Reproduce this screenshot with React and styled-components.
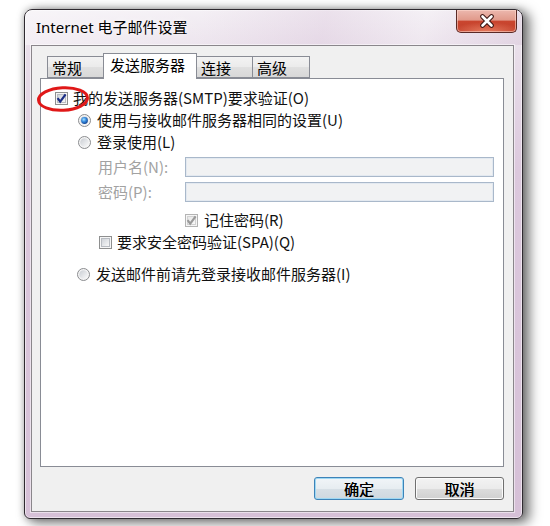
import React, { useId } from 'react';
import styled, { createGlobalStyle } from 'styled-components';

const GlobalStyle = createGlobalStyle`
  html, body { margin: 0; padding: 0; background: #ffffff; }
  body {
    width: 550px; height: 526px; overflow: hidden;
    font-family: "Noto Sans CJK SC", "Noto Sans", sans-serif;
    color: #111;
  }
  * { box-sizing: border-box; }
`;

const Page = styled.div`
  width: 550px;
  height: 526px;
  padding: 9px 0 0 24px;
`;

const Window = styled.div`
  width: 499px;
  height: 510px;
  border: 1px solid #2f2a30;
  border-radius: 8px 8px 6px 6px;
  background: linear-gradient(180deg, #f2edf3 0px, #e9dfea 40px, #dcc8dd 160px, #d6c0d7 100%);
  box-shadow: inset 0 0 0 1px rgba(255, 255, 255, 0.55), 6px 3px 12px 1px rgba(0, 0, 0, 0.5),
    0 0 7px rgba(0, 0, 0, 0.25);
  display: flex;
  flex-direction: column;
`;

const TitleBar = styled.div`
  height: 35px;
  flex: none;
  display: flex;
  justify-content: space-between;
  align-items: flex-start;
  padding-left: 11px;
  border-radius: 7px 7px 0 0;
  background: linear-gradient(100deg, rgba(255, 255, 255, 0.45) 0%, rgba(255, 255, 255, 0.15) 35%,
    rgba(215, 190, 215, 0.25) 60%, rgba(255, 255, 255, 0.2) 80%, rgba(205, 180, 205, 0.3) 100%);
`;

const Title = styled.div`
  font-family: "Noto Sans", "Noto Sans CJK SC", sans-serif;
  font-size: 15px;
  line-height: 20px;
  margin-top: 7px;
  color: #000;
  text-shadow: 0 0 6px rgba(255, 255, 255, 0.9);
`;

const CloseButton = styled.div`
  width: 61px;
  height: 23px;
  margin-right: 5px;
  border: 1px solid #5a2a26;
  border-top: none;
  border-radius: 0 0 5px 5px;
  background: radial-gradient(ellipse 60% 45% at 50% 100%, rgba(240, 140, 110, 0.8), rgba(240, 140, 110, 0) 100%),
    linear-gradient(180deg, #ecb8ae 0%, #e19a8b 45%, #c9452f 52%, #c2402b 100%);
  box-shadow: inset 0 0 0 1px rgba(255, 220, 210, 0.55);
  display: flex;
  align-items: center;
  justify-content: center;
`;

const Client = styled.div`
  flex: 1;
  margin: 0 8px 6px 6px;
  border: 1px solid #8a868b;
  box-shadow: 0 0 0 1px rgba(255, 255, 255, 0.5);
  background: #f0f0f0;
  padding: 7px 9px 0 8px;
  display: flex;
  flex-direction: column;
`;

const TabStrip = styled.div`
  display: flex;
  align-items: flex-end;
  height: 26px;
  padding-left: 7px;
  margin-bottom: -1px;
  position: relative;
  z-index: 2;
`;

const Tab = styled.div`
  width: ${(p) => p.$w}px;
  height: ${(p) => (p.$active ? 26 : 22)}px;
  margin-bottom: ${(p) => (p.$active ? 0 : 1)}px;
  margin-left: ${(p) => (p.$first ? 0 : -1)}px;
  border: 1px solid #898c95;
  border-bottom: ${(p) => (p.$active ? 'none' : '1px solid #898c95')};
  background: ${(p) =>
    p.$active ? '#ffffff' : 'linear-gradient(180deg, #f3f3f3 0%, #ebebeb 50%, #e0e0e0 51%, #d8d8d8 100%)'};
  position: relative;
  z-index: ${(p) => (p.$active ? 2 : 1)};
  font-size: 15px;
  line-height: 19px;
  padding-left: ${(p) => (p.$active ? 6 : 4)}px;
  padding-top: 1px;
  color: #000;
  white-space: nowrap;
`;

const Panel = styled.div`
  height: 389px;
  flex: none;
  border: 1px solid #898c95;
  background: #ffffff;
  position: relative;
  z-index: 1;
  padding-top: 9px;
  display: flex;
  flex-direction: column;
`;

const Row = styled.div`
  display: flex;
  align-items: center;
  height: 20px;
  margin-left: ${(p) => p.$indent}px;
  margin-top: ${(p) => p.$top}px;
  gap: ${(p) => p.$gap ?? 5}px;
  position: relative;
`;

const Label = styled.span`
  font-size: 15px;
  line-height: 20px;
  white-space: nowrap;
  color: ${(p) => (p.$disabled ? '#a2a2a2' : '#111111')};
`;

const FieldLabel = styled(Label)`
  width: 87px;
  flex: none;
`;

const TextBox = styled.div`
  width: 309px;
  height: 20px;
  border: 1px solid #a9b8ca;
  box-shadow: inset 0 0 0 1px #e3e9f0;
  background: #f1f2f3;
`;

const Annotation = styled.svg`
  position: absolute;
  left: -18px;
  top: -2px;
  overflow: visible;
  pointer-events: none;
`;

const ButtonRow = styled.div`
  display: flex;
  justify-content: flex-end;
  gap: 11px;
  margin-top: 10px;
`;

const Button = styled.div`
  width: ${(p) => p.$w}px;
  height: 23px;
  border-radius: 3px;
  border: 1px solid ${(p) => (p.$default ? '#3d83b8' : '#707070')};
  box-shadow: inset 0 0 0 1px ${(p) => (p.$default ? '#9fd8f3' : '#fbfbfb')};
  background: ${(p) =>
    p.$default
      ? 'linear-gradient(180deg, #f1f5f8 0%, #e7edf1 50%, #d8e0e6 51%, #cfd8df 100%)'
      : 'linear-gradient(180deg, #f3f3f3 0%, #ebebeb 50%, #dddddd 51%, #d0d0d0 100%)'};
  font-size: 15px;
  line-height: 21px;
  text-align: center;
  color: #000;
  text-shadow: 0.3px 0 0 #000;
`;

function CheckBox({ checked, disabled }) {
  const id = useId().replace(/:/g, '');
  const border = disabled ? '#b4b4b4' : '#8e8f8f';
  const mark = disabled ? '#9a9a9a' : '#1c2f86';
  return (
    <svg width="13" height="13" viewBox="0 0 13 13" style={{ flex: 'none' }}>
      <defs>
        <linearGradient id={`cb${id}`} x1="0" y1="0" x2="1" y2="1">
          <stop offset="0" stopColor={disabled ? '#e6e6e6' : '#cdd1d7'} />
          <stop offset="1" stopColor="#fafafa" />
        </linearGradient>
      </defs>
      <rect x="0.5" y="0.5" width="12" height="12" fill="#f6f6f6" stroke={border} />
      <rect x="2.5" y="2.5" width="8" height="8" fill={`url(#cb${id})`} stroke={disabled ? '#d2d2d2' : '#b8bcc2'} />
      {checked && (
        <path d="M2.6 6.2 L5.2 9.6 L10.6 2.4" stroke={mark} strokeWidth="2.2" fill="none" strokeLinejoin="miter" />
      )}
    </svg>
  );
}

function Radio({ selected }) {
  const id = useId().replace(/:/g, '');
  return (
    <svg width="13" height="13" viewBox="0 0 13 13" style={{ flex: 'none' }}>
      <defs>
        <linearGradient id={`rg${id}`} x1="0" y1="0" x2="1" y2="1">
          <stop offset="0" stopColor="#c9cdd3" />
          <stop offset="1" stopColor="#fbfbfb" />
        </linearGradient>
        <radialGradient id={`rs${id}`} cx="0.4" cy="0.35" r="0.7">
          <stop offset="0" stopColor="#a8e4ff" />
          <stop offset="0.45" stopColor="#3a8ee0" />
          <stop offset="1" stopColor="#0d3c8c" />
        </radialGradient>
      </defs>
      <circle cx="6.5" cy="6.5" r="6" fill="#f4f4f4" stroke="#8a8c8f" />
      <circle cx="6.5" cy="6.5" r="4.3" fill={`url(#rg${id})`} />
      {selected && <circle cx="6.5" cy="6.5" r="3.4" fill={`url(#rs${id})`} />}
    </svg>
  );
}

export default function App() {
  return (
    <>
      <GlobalStyle />
      <Page>
        <Window>
          <TitleBar>
            <Title>Internet 电子邮件设置</Title>
            <CloseButton>
              <svg width="18" height="14" viewBox="0 0 18 14">
                <path d="M4.5 2.5 L13.5 11.5 M13.5 2.5 L4.5 11.5" stroke="#3b1512" strokeWidth="4.6" strokeLinecap="round" />
                <path d="M4.5 2.5 L13.5 11.5 M13.5 2.5 L4.5 11.5" stroke="#ffffff" strokeWidth="2.6" strokeLinecap="round" />
              </svg>
            </CloseButton>
          </TitleBar>
          <Client>
            <TabStrip>
              <Tab $w={57} $first>常规</Tab>
              <Tab $w={94} $active>发送服务器</Tab>
              <Tab $w={57}>连接</Tab>
              <Tab $w={58}>高级</Tab>
            </TabStrip>
            <Panel>
              <Row $indent={14} $top={0}>
                <CheckBox checked />
                <Label>我的发送服务器(SMTP)要求验证(O)</Label>
                <Annotation width="52" height="26" viewBox="0 0 52 26">
                  <ellipse cx="26" cy="13" rx="24.5" ry="11.3" fill="none" stroke="#e01818" strokeWidth="3"
                    transform="rotate(-3 26 13)" />
                </Annotation>
              </Row>
              <Row $indent={37} $top={2} $gap={6}>
                <Radio selected />
                <Label>使用与接收邮件服务器相同的设置(U)</Label>
              </Row>
              <Row $indent={37} $top={2} $gap={6}>
                <Radio />
                <Label>登录使用(L)</Label>
              </Row>
              <Row $indent={57} $top={5} $gap={0}>
                <FieldLabel $disabled>用户名(N):</FieldLabel>
                <TextBox />
              </Row>
              <Row $indent={57} $top={5} $gap={0}>
                <FieldLabel $disabled>密码(P):</FieldLabel>
                <TextBox />
              </Row>
              <Row $indent={144} $top={8} $gap={6}>
                <CheckBox checked disabled />
                <Label>记住密码(R)</Label>
              </Row>
              <Row $indent={58} $top={2}>
                <CheckBox />
                <Label>要求安全密码验证(SPA)(Q)</Label>
              </Row>
              <Row $indent={36} $top={12} $gap={6}>
                <Radio />
                <Label>发送邮件前请先登录接收邮件服务器(I)</Label>
              </Row>
            </Panel>
            <ButtonRow>
              <Button $w={90} $default>确定</Button>
              <Button $w={89}>取消</Button>
            </ButtonRow>
          </Client>
        </Window>
      </Page>
    </>
  );
}
